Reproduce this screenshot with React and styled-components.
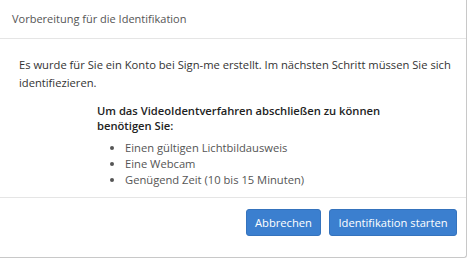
import React from 'react';
import styled, { createGlobalStyle } from 'styled-components';

const GlobalStyle = createGlobalStyle`
  html, body {
    margin: 0;
    padding: 0;
    background: #fff;
  }
  body {
    font-family: "Open Sans", "Liberation Sans", sans-serif;
    font-size: 11.2px;
    color: #333;
  }
`;

const Modal = styled.div`
  width: 467px;
  height: 258px;
  box-sizing: border-box;
  border-right: 1px solid #c8c8c8;
  border-bottom: 1px solid #c8c8c8;
  border-bottom-right-radius: 3px;
  display: flex;
  flex-direction: column;
  background: #fff;
`;

const Header = styled.div`
  height: 39px;
  box-sizing: border-box;
  padding: 10px 12px 0;
  border-bottom: 1px solid #e5e5e5;
  color: #555;
  font-size: 11px;
  line-height: 18px;
`;

const Body = styled.div`
  padding: 17px 8px 0 19px;
  height: 159px;
  box-sizing: border-box;
  border-bottom: 1px solid #e5e5e5;
`;

const Intro = styled.p`
  margin: 0 0 11px;
  line-height: 18px;
`;

const Needs = styled.div`
  margin-left: 78px;
`;

const NeedsTitle = styled.div`
  font-weight: 600;
  color: #222;
  width: 285px;
  line-height: 15px;
  margin-bottom: 7px;
`;

const List = styled.ul`
  margin: 0;
  padding-left: 28px;
  line-height: 16px;
  color: #555;
`;

const Footer = styled.div`
  display: flex;
  justify-content: flex-end;
  gap: 8px;
  padding: 11px 9px 0 0;
`;

const Button = styled.button`
  font-family: inherit;
  font-size: 11.2px;
  color: #fff;
  background: #3b7fcf;
  border: 1px solid #3573bd;
  border-radius: 3px;
  height: 27px;
  width: ${(props) => props.w}px;
  padding: 0;
  cursor: pointer;
`;

const App = () => {
  return (
    <>
      <GlobalStyle />
      <Modal>
        <Header>Vorbereitung für die Identifikation</Header>
        <Body>
          <Intro>
            Es wurde für Sie ein Konto bei Sign-me erstellt. Im nächsten Schritt müssen Sie sich identifiezieren.
          </Intro>
          <Needs>
            <NeedsTitle>Um das VideoIdentverfahren abschließen zu können benötigen Sie:</NeedsTitle>
            <List>
              <li>Einen gültigen Lichtbildausweis</li>
              <li>Eine Webcam</li>
              <li>Genügend Zeit (10 bis 15 Minuten)</li>
            </List>
          </Needs>
        </Body>
        <Footer>
          <Button w={75}>Abbrechen</Button>
          <Button w={128}>Identifikation starten</Button>
        </Footer>
      </Modal>
    </>
  );
};

export default App;
